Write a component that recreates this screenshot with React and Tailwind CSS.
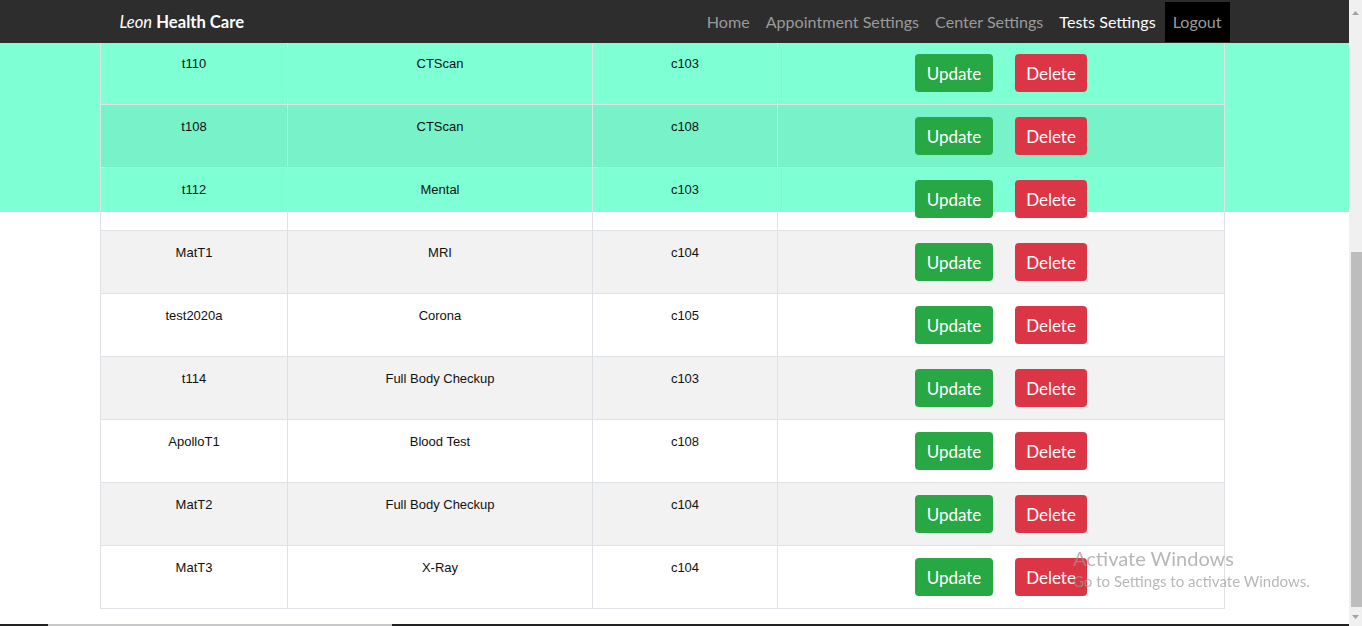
import React from 'react';

const tests = [
  { id: 't110', name: 'CTScan', center: 'c103' },
  { id: 't108', name: 'CTScan', center: 'c108' },
  { id: 't112', name: 'Mental', center: 'c103' },
  { id: 'MatT1', name: 'MRI', center: 'c104' },
  { id: 'test2020a', name: 'Corona', center: 'c105' },
  { id: 't114', name: 'Full Body Checkup', center: 'c103' },
  { id: 'ApolloT1', name: 'Blood Test', center: 'c108' },
  { id: 'MatT2', name: 'Full Body Checkup', center: 'c104' },
  { id: 'MatT3', name: 'X-Ray', center: 'c104' },
];

const Navbar = () => (
  <nav className="fixed top-0 left-0 z-10 h-[43px] w-[1349px] bg-[#2d2d2d] font-['Lato',sans-serif]">
    <div className="mx-auto flex h-full w-[1140px] items-center justify-between px-[15px]">
      <a className="pt-[2px] text-[16.6px] text-white">
        <i>Leon</i> <b>Health Care</b>
      </a>
      <ul className="flex h-full items-center text-[16.1px]">
        <li className="px-2 pt-[2px] text-[#9a9a9a]">Home</li>
        <li className="px-2 pt-[2px] text-[#9a9a9a]">Appointment Settings</li>
        <li className="px-2 pt-[2px] text-[#9a9a9a]">Center Settings</li>
        <li className="px-2 pt-[2px] text-white">Tests Settings</li>
        <li className="ml-[1px] flex h-[40px] items-center bg-black px-2 pt-[2px] text-[#9a9a9a]">Logout</li>
      </ul>
    </div>
  </nav>
);

const TestRow = ({ test, striped }) => (
  <div className={`grid grid-cols-[187px_305px_185px_448px] ${striped ? 'bg-black/5' : ''}`}>
    <div className="h-[63px] border-l border-t border-[#dee2e6] pt-3 text-center leading-[19.5px]">{test.id}</div>
    <div className="h-[63px] border-l border-t border-[#dee2e6] pt-3 text-center leading-[19.5px]">{test.name}</div>
    <div className="h-[63px] border-l border-t border-[#dee2e6] pt-3 text-center leading-[19.5px]">{test.center}</div>
    <div className="flex h-[63px] justify-center gap-[22px] border-x border-t border-[#dee2e6] pt-3 font-['Lato',sans-serif] text-[17px] text-white">
      <button className="h-[38px] w-[78px] rounded-[4px] bg-[#28a745] pt-[2px]">Update</button>
      <button className="h-[38px] w-[72px] rounded-[4px] bg-[#dc3545] pt-[2px]">Delete</button>
    </div>
  </div>
);

const Scrollbar = () => (
  <div className="flex h-full w-[13px] flex-col bg-[#f0f0f0]">
    <div className="flex h-[17px] items-end justify-center pb-[2px]">
      <svg width="7" height="4" viewBox="0 0 7 4"><path d="M0 4 L3.5 0 L7 4 Z" fill="#a3a3a3" /></svg>
    </div>
    <div className="h-[235px]" />
    <div className="ml-[2px] h-[355px] w-[11px] bg-[#bdbdbd]" />
    <div className="flex flex-1 items-center justify-center">
      <svg width="7" height="4" viewBox="0 0 7 4"><path d="M0 0 L7 0 L3.5 4 Z" fill="#a3a3a3" /></svg>
    </div>
  </div>
);

export default function App() {
  return (
    <div className="flex h-[626px] w-[1362px] overflow-hidden bg-white font-['Liberation_Sans',Arial,sans-serif] text-[13px] text-[#111]">
      <Navbar />
      <main className="flex h-full w-[1349px] flex-col">
        <section className="h-[212px] shrink-0 bg-[#7fffd4] pt-[41px]">
          <div className="ml-[100px] w-[1125px] border-b border-[#dee2e6]">
            {tests.map((t, i) => (
              <TestRow key={t.id} test={t} striped={i % 2 === 1} />
            ))}
          </div>
        </section>
        <div className="flex-1" />
        <div className="flex h-[2px] shrink-0">
          <div className="w-[48px] bg-[#222]" />
          <div className="w-[344px] bg-[#c8c8c8]" />
          <div className="flex-1 bg-[#222]" />
        </div>
      </main>
      <Scrollbar />
      <div className="pointer-events-none fixed left-[1073px] top-[545px] z-20 font-['Lato',sans-serif] text-[#999]/70">
        <div className="text-[20px] leading-[26px]">Activate Windows</div>
        <div className="text-[15px] leading-[20px]">Go to Settings to activate Windows.</div>
      </div>
    </div>
  );
}
